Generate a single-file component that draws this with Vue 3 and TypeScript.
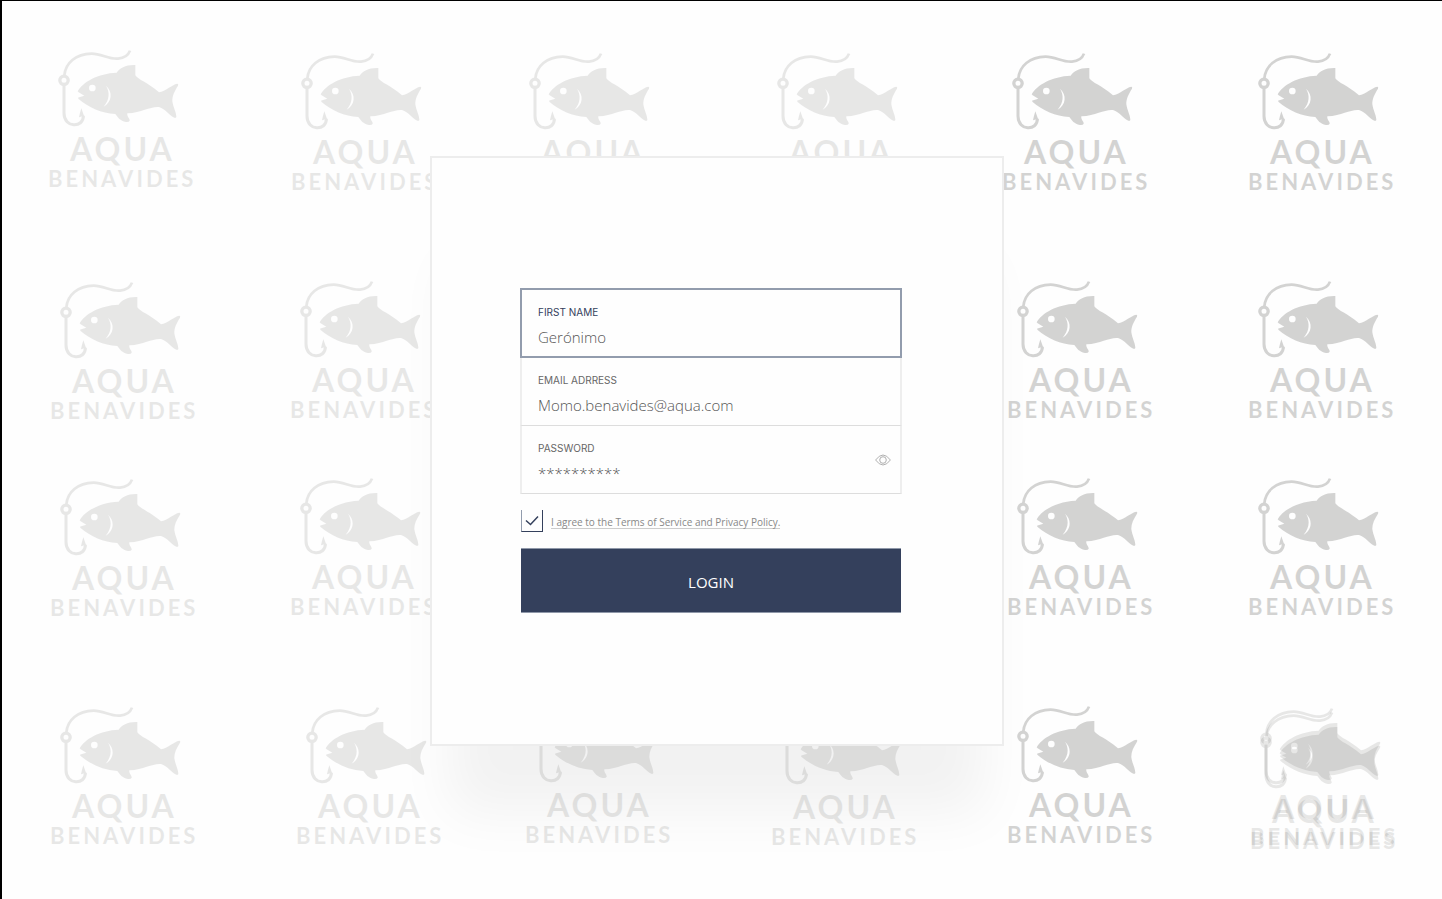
<script setup lang="ts">
import { ref } from 'vue'

interface Mark {
  x: number
  y: number
  layers?: number
}

const marks: Mark[] = [
  { x: 30, y: 30 },
  { x: 273, y: 33 },
  { x: 501, y: 33 },
  { x: 749, y: 33 },
  { x: 984, y: 33, layers: 2 },
  { x: 1230, y: 33, layers: 2 },
  { x: 32, y: 262 },
  { x: 272, y: 261 },
  { x: 989, y: 261, layers: 2 },
  { x: 1230, y: 261, layers: 2 },
  { x: 32, y: 459 },
  { x: 272, y: 458 },
  { x: 989, y: 458, layers: 2 },
  { x: 1230, y: 458, layers: 2 },
  { x: 32, y: 687 },
  { x: 278, y: 687 },
  { x: 507, y: 686 },
  { x: 753, y: 688 },
  { x: 989, y: 686, layers: 2 },
  { x: 1232, y: 688 },
  { x: 1232, y: 692 },
]

const firstName = ref('Gerónimo')
const email = ref('Momo.benavides@aqua.com')
const password = ref('**********')
const agreed = ref(true)
</script>

<template>
  <main class="page">
    <svg class="pattern" aria-hidden="true">
      <g
        v-for="(mark, i) in marks"
        :key="i"
        :class="['mark', { strong: mark.layers === 2 }]"
        :transform="`translate(${mark.x} ${mark.y})`"
      >
        <g transform="scale(0.33333)">
          <path class="line" d="M103 137 C106 99 137 72 185 71 C215 71 235 88 264 86 C285 84 295 76 300 62" />
          <circle class="ring" cx="102" cy="151" r="12.5" />
          <path class="shaft" d="M102 167 V249 C102 295 161 295 160 257" />
          <path class="solid" d="M154 235 L164 263 L157 259 L147 262 Q150 248 154 235 Z" />
          <path
            class="solid"
            d="M143 184 C158 156 205 130 260 128 C270 114 287 104 316 105 V136 C324 149 352 157 387 187 C407 184 425 164 442 161 Q446 161 444 167 C433 184 426 199 427 214 C430 234 438 244 439 260 Q438 265 433 263 C414 254 408 238 387 231 C362 228 338 247 292 250 C290 261 300 265 299 272 Q297 277 288 276 C270 272 264 263 256 252 C214 249 177 233 145 206 Q143 202 148 202 L163 197 L146 187 Z M197 174 A10 10 0 1 0 177 174 A10 10 0 1 0 197 174 Z M228 167 C240 186 239 209 221 230 C246 216 249 185 228 167 Z"
          />
        </g>
        <text class="brand" x="40" y="131">AQUA</text>
        <text class="family" x="18" y="157">BENAVIDES</text>
      </g>
    </svg>

    <section class="card">
      <form @submit.prevent>
        <div class="fields">
          <div class="field active">
            <label for="first-name">FIRST NAME</label>
            <input id="first-name" v-model="firstName" type="text" />
          </div>
          <div class="field">
            <label for="email">EMAIL ADRRESS</label>
            <input id="email" v-model="email" type="text" />
          </div>
          <div class="field">
            <label for="password">PASSWORD</label>
            <input id="password" v-model="password" type="text" />
            <button class="reveal" type="button" aria-label="Show password">
              <svg viewBox="0 0 16 12" width="16" height="12">
                <path d="M.6 6 Q8 -4 15.4 6 Q8 16 .6 6 Z" />
                <circle cx="8" cy="6" r="3.3" />
              </svg>
            </button>
          </div>
        </div>

        <div class="terms">
          <span class="check">
            <input id="terms" v-model="agreed" type="checkbox" />
            <svg v-if="agreed" viewBox="0 0 22 22" width="22" height="22">
              <path d="M5 10.5 L9.5 14.5 L17 6.5" />
            </svg>
          </span>
          <label for="terms">I agree to the Terms of Service and Privacy Policy.</label>
        </div>

        <button class="login" type="submit">LOGIN</button>
      </form>
    </section>
  </main>
</template>

<style>
body {
  background: #fefefe;
}
</style>

<style scoped>
.page {
  position: relative;
  box-sizing: border-box;
  min-height: 100vh;
  display: flex;
  align-items: center;
  justify-content: center;
  padding: 2px 10px 0 0;
  border-top: 1px solid #000;
  border-left: 2px solid #000;
  background: #fefefe;
  font-family: Inter, "Liberation Sans", sans-serif;
  overflow: hidden;
}
.pattern {
  position: absolute;
  top: -1px;
  left: -2px;
  width: 100%;
  height: 100%;
  overflow: visible;
}
.mark {
  fill: #0c0c08;
  stroke: none;
  opacity: 0.09;
}
.mark.strong {
  opacity: 0.172;
}
.line,
.ring,
.shaft {
  fill: none;
  stroke: #0c0c08;
}
.line {
  stroke-width: 8;
}
.ring {
  stroke-width: 10;
}
.shaft {
  stroke-width: 9;
}
.solid {
  fill-rule: evenodd;
}
.brand {
  font: 700 32px Lato, sans-serif;
  letter-spacing: 3px;
}
.family {
  font: 700 22px Lato, sans-serif;
  letter-spacing: 3px;
}
.card {
  position: relative;
  box-sizing: border-box;
  width: 100%;
  max-width: 574px;
  padding: 130px 100px 131px 88px;
  border: 2px solid #ededed;
  background: #fefefe;
  box-shadow: 0 87px 52px -20px rgba(0, 0, 0, 0.05);
}
.field {
  position: relative;
  box-sizing: border-box;
  height: 68px;
  padding: 15px 16px 0;
  border: solid #eee;
  border-width: 0 2px;
  border-bottom: 1px solid #ddd;
}
.field.active {
  height: 70px;
  border: 2px solid #929cad;
}
.field label {
  display: block;
  font-size: 10px;
  line-height: 14px;
  color: #666;
}
.field.active label {
  color: #34405c;
}
.field input {
  display: block;
  width: 100%;
  height: 24px;
  margin: 6px 0 0;
  padding: 0;
  border: 0;
  outline: 0;
  background: none;
  font: 300 15px "Open Sans", "Liberation Sans", sans-serif;
  color: #555;
}
.reveal {
  position: absolute;
  right: 9px;
  top: 28px;
  display: flex;
  padding: 0;
  border: 0;
  background: none;
}
.reveal path,
.reveal circle {
  fill: none;
  stroke: #b0b0b0;
}
.terms {
  display: flex;
  align-items: center;
  gap: 8px;
  margin: 16px 1px;
}
.check {
  display: grid;
}
.check > * {
  grid-area: 1 / 1;
}
.check input {
  appearance: none;
  box-sizing: border-box;
  width: 22px;
  height: 22px;
  margin: 0;
  border: 1px solid #34405c;
  border-top: 0;
  border-left-color: #929cad;
}
.check svg {
  pointer-events: none;
}
.check path {
  fill: none;
  stroke: #34405c;
  stroke-width: 1.5;
}
.terms label {
  padding-top: 2px;
  font-family: "Open Sans", "Liberation Sans", sans-serif;
  font-size: 10px;
  font-weight: 400;
  line-height: 12px;
  color: #888;
  border-bottom: 1px solid #ccc;
}
.login {
  display: block;
  width: calc(100% - 2px);
  height: 65px;
  margin: 0 1px;
  padding: 2px 0 0;
  border: solid #8f98a9;
  border-width: 1px 0;
  background: #34405c;
  color: #fff;
  font: 400 15px "Open Sans", "Liberation Sans", sans-serif;
}
</style>
